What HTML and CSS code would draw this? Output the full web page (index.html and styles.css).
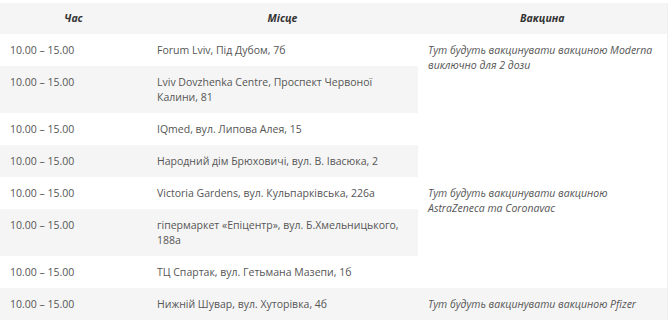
FILE: index.html
```html
<!DOCTYPE html>
<html lang="uk">
<head>
<meta charset="utf-8">
<link rel="stylesheet" href="styles.css">
</head>
<body>
<table class="sched">
  <colgroup>
    <col class="c-time">
    <col class="c-place">
    <col class="c-vac">
  </colgroup>
  <thead>
    <tr><th>Час</th><th>Місце</th><th>Вакцина</th></tr>
  </thead>
  <tbody>
    <tr class="odd"><td>10.00 – 15.00</td><td>Forum Lviv, Під Дубом, 7б</td><td class="vac" rowspan="4">Тут будуть вакцинувати вакциною Moderna виключно для 2 дози</td></tr>
    <tr class="even"><td>10.00 – 15.00</td><td>Lviv Dovzhenka Centre, Проспект Червоної Калини, 81</td></tr>
    <tr class="odd"><td>10.00 – 15.00</td><td>IQmed, вул. Липова Алея, 15</td></tr>
    <tr class="even"><td>10.00 – 15.00</td><td>Народний дім Брюховичі, вул. В. Івасюка, 2</td></tr>
    <tr class="odd"><td>10.00 – 15.00</td><td>Victoria Gardens, вул. Кульпарківська, 226а</td><td class="vac" rowspan="3">Тут будуть вакцинувати вакциною AstraZeneca та Coronavac</td></tr>
    <tr class="even"><td>10.00 – 15.00</td><td>гіпермаркет «Епіцентр», вул. Б.Хмельницького, 188а</td></tr>
    <tr class="odd"><td>10.00 – 15.00</td><td>ТЦ Спартак, вул. Гетьмана Мазепи, 1б</td></tr>
    <tr class="even"><td>10.00 – 15.00</td><td>Нижній Шувар, вул. Хуторівка, 4б</td><td class="vac">Тут будуть вакцинувати вакциною Pfizer</td></tr>
  </tbody>
</table>
</body>
</html>
```

FILE: styles.css
```css
html, body {
  margin: 0;
  padding: 0;
  background: #fff;
}
body {
  padding-top: 3px;
  font-family: "Open Sans", "Liberation Sans", sans-serif;
  font-size: 10.5px;
  color: #555;
}
.sched {
  width: 667px;
  border-collapse: collapse;
  table-layout: fixed;
  border-right: 1px solid #efefef;
}
.c-time { width: 147px; }
.c-place { width: 271px; }
.c-vac { width: 249px; }
.sched th {
  background: #f5f5f5;
  color: #333;
  font-weight: 700;
  font-style: italic;
  text-align: center;
  height: 31px;
  padding: 0 10px;
  line-height: 15px;
}
.sched td {
  padding: 9px 10px 8px;
  line-height: 15px;
  vertical-align: top;
  text-align: left;
}
.sched tr.even td {
  background: #f5f5f5;
}
.sched td.vac {
  font-style: italic;
}
```
